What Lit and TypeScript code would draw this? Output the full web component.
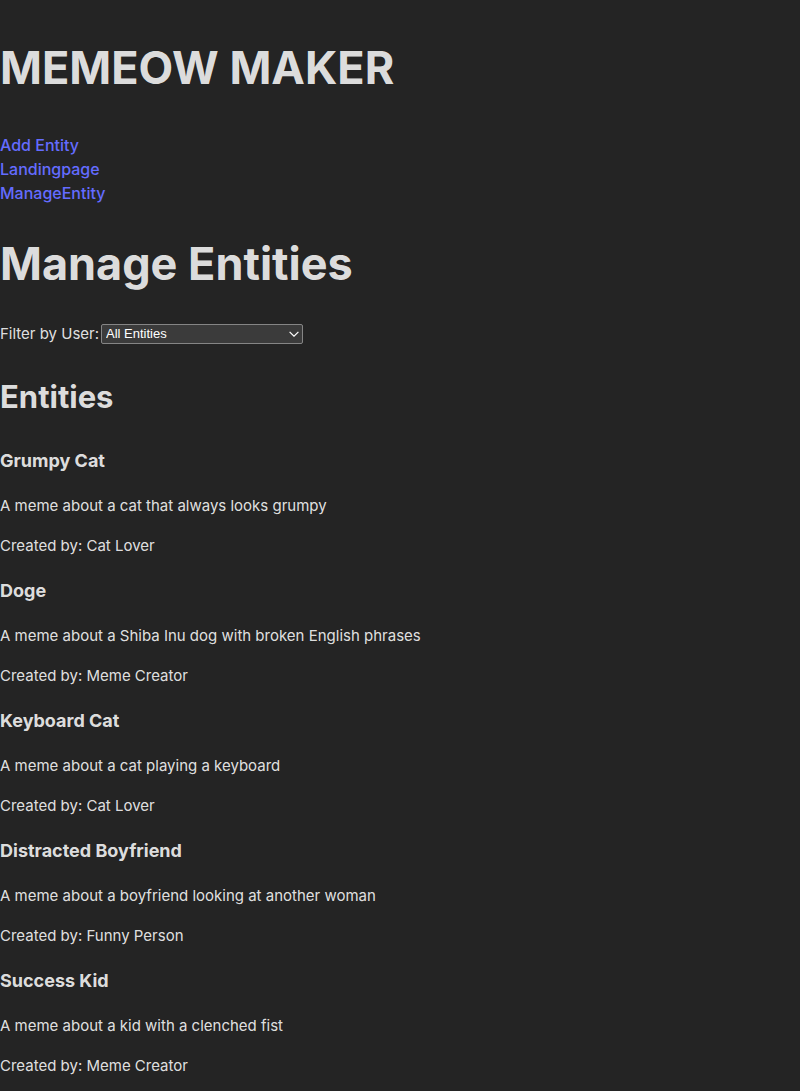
import { LitElement, html, css } from "lit";
import { customElement, state } from "lit/decorators.js";

interface Entity {
  name: string;
  description: string;
  creator: string;
}

const ENTITIES: Entity[] = [
  { name: "Grumpy Cat", description: "A meme about a cat that always looks grumpy", creator: "Cat Lover" },
  { name: "Doge", description: "A meme about a Shiba Inu dog with broken English phrases", creator: "Meme Creator" },
  { name: "Keyboard Cat", description: "A meme about a cat playing a keyboard", creator: "Cat Lover" },
  { name: "Distracted Boyfriend", description: "A meme about a boyfriend looking at another woman", creator: "Funny Person" },
  { name: "Success Kid", description: "A meme about a kid with a clenched fist", creator: "Meme Creator" },
];

@customElement("app-root")
export class AppRoot extends LitElement {
  @state() private creator = "";

  static styles = css`
    :host {
      display: flow-root;
      box-sizing: border-box;
      min-height: 100vh;
      background: #242424;
      color: rgba(255, 255, 255, 0.87);
      font-family: Inter, "Liberation Sans", sans-serif;
      font-size: 15px;
      line-height: 24px;
    }
    .header {
      padding: 9px 0 7px;
    }
    .title {
      margin: 32px 0;
      font-size: 45px;
      line-height: 53px;
      font-weight: 700;
    }
    .nav {
      display: flex;
      flex-direction: column;
      align-items: flex-start;
    }
    .link {
      color: #646cff;
      font-size: 16px;
      font-weight: 500;
      text-decoration: none;
    }
    .filter {
      display: flex;
      align-items: center;
      gap: 2px;
    }
    .picker {
      display: grid;
      align-items: center;
    }
    .picker > * {
      grid-area: 1 / 1;
    }
    .select {
      appearance: none;
      box-sizing: border-box;
      width: 202px;
      height: 20px;
      margin: 0;
      padding: 0 20px 0 4px;
      border: 1px solid #858585;
      border-radius: 2px;
      background: #3b3b3b;
      color: #fff;
      font: 13px/18px "Liberation Sans", sans-serif;
    }
    .chevron {
      z-index: 1;
      justify-self: end;
      width: 10px;
      height: 6px;
      margin-right: 4px;
      fill: none;
      stroke: #fff;
      stroke-width: 1.2;
      pointer-events: none;
    }
    .section {
      margin: 27px 0 26px;
      font-size: 31px;
      line-height: 48px;
      font-weight: 700;
    }
    .name {
      margin: 19px 0;
      font-size: 18px;
      line-height: 28px;
      font-weight: 700;
    }
    .text {
      margin: 16px 0;
    }
  `;

  private onFilter(e: Event) {
    this.creator = (e.target as HTMLSelectElement).value;
  }

  render() {
    const creators = [...new Set(ENTITIES.map((e) => e.creator))];
    const shown = ENTITIES.filter((e) => !this.creator || e.creator === this.creator);
    return html`
      <header class="header"><h1 class="title">MEMEOW MAKER</h1></header>
      <nav class="nav">
        <a class="link" href="#add">Add Entity</a>
        <a class="link" href="#landing">Landingpage</a>
        <a class="link" href="#manage">ManageEntity</a>
      </nav>
      <main>
        <h1 class="title">Manage Entities</h1>
        <div class="filter">
          <label for="creator">Filter by User:</label>
          <span class="picker">
            <select id="creator" class="select" @change=${this.onFilter}>
              <option value="">All Entities</option>
              ${creators.map((c) => html`<option value=${c}>${c}</option>`)}
            </select>
            <svg class="chevron" viewBox="0 0 10 6" aria-hidden="true"><path d="M.6 .8 5 5.2 9.4 .8" /></svg>
          </span>
        </div>
        <h2 class="section">Entities</h2>
        ${shown.map(
          (e) => html`<article>
            <h3 class="name">${e.name}</h3>
            <p class="text">${e.description}</p>
            <p class="text">Created by: ${e.creator}</p>
          </article>`
        )}
      </main>
    `;
  }
}
